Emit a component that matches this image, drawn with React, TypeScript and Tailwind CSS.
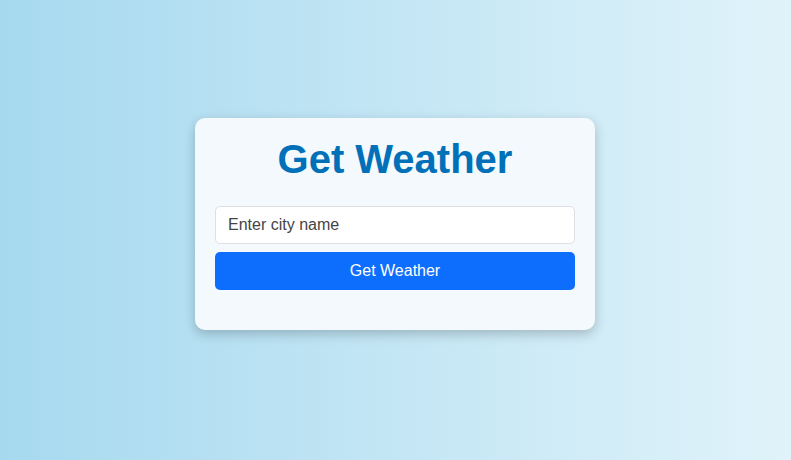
import React from "react";

export default function App() {
  return (
    <div
      className="w-full h-screen flex items-center justify-center pb-[12px] pr-[1px] bg-gradient-to-r from-[#a6d9ef] to-[#e0f3fa]"
      style={{ fontFamily: '"Liberation Sans", Arial, sans-serif' }}
    >
      <div className="w-[400px] bg-[#f3f9fc] rounded-[10px] shadow-[0_4px_12px_rgba(0,0,0,0.22)] px-[20px] pt-[18px] pb-[40px]">
        <h1 className="text-center text-[40px] leading-[46px] font-bold text-[#0070b8] mb-[24px]">
          Get Weather
        </h1>
        <input
          type="text"
          placeholder="Enter city name"
          className="block w-full h-[38px] bg-white border border-[#dcdfe3] rounded-[5px] pl-[12px] text-[16px] text-[#333] placeholder:text-[#444] outline-none"
        />
        <button className="block w-full h-[38px] mt-[8px] bg-[#0d6efd] text-white text-[16px] rounded-[5px]">
          Get Weather
        </button>
      </div>
    </div>
  );
}
